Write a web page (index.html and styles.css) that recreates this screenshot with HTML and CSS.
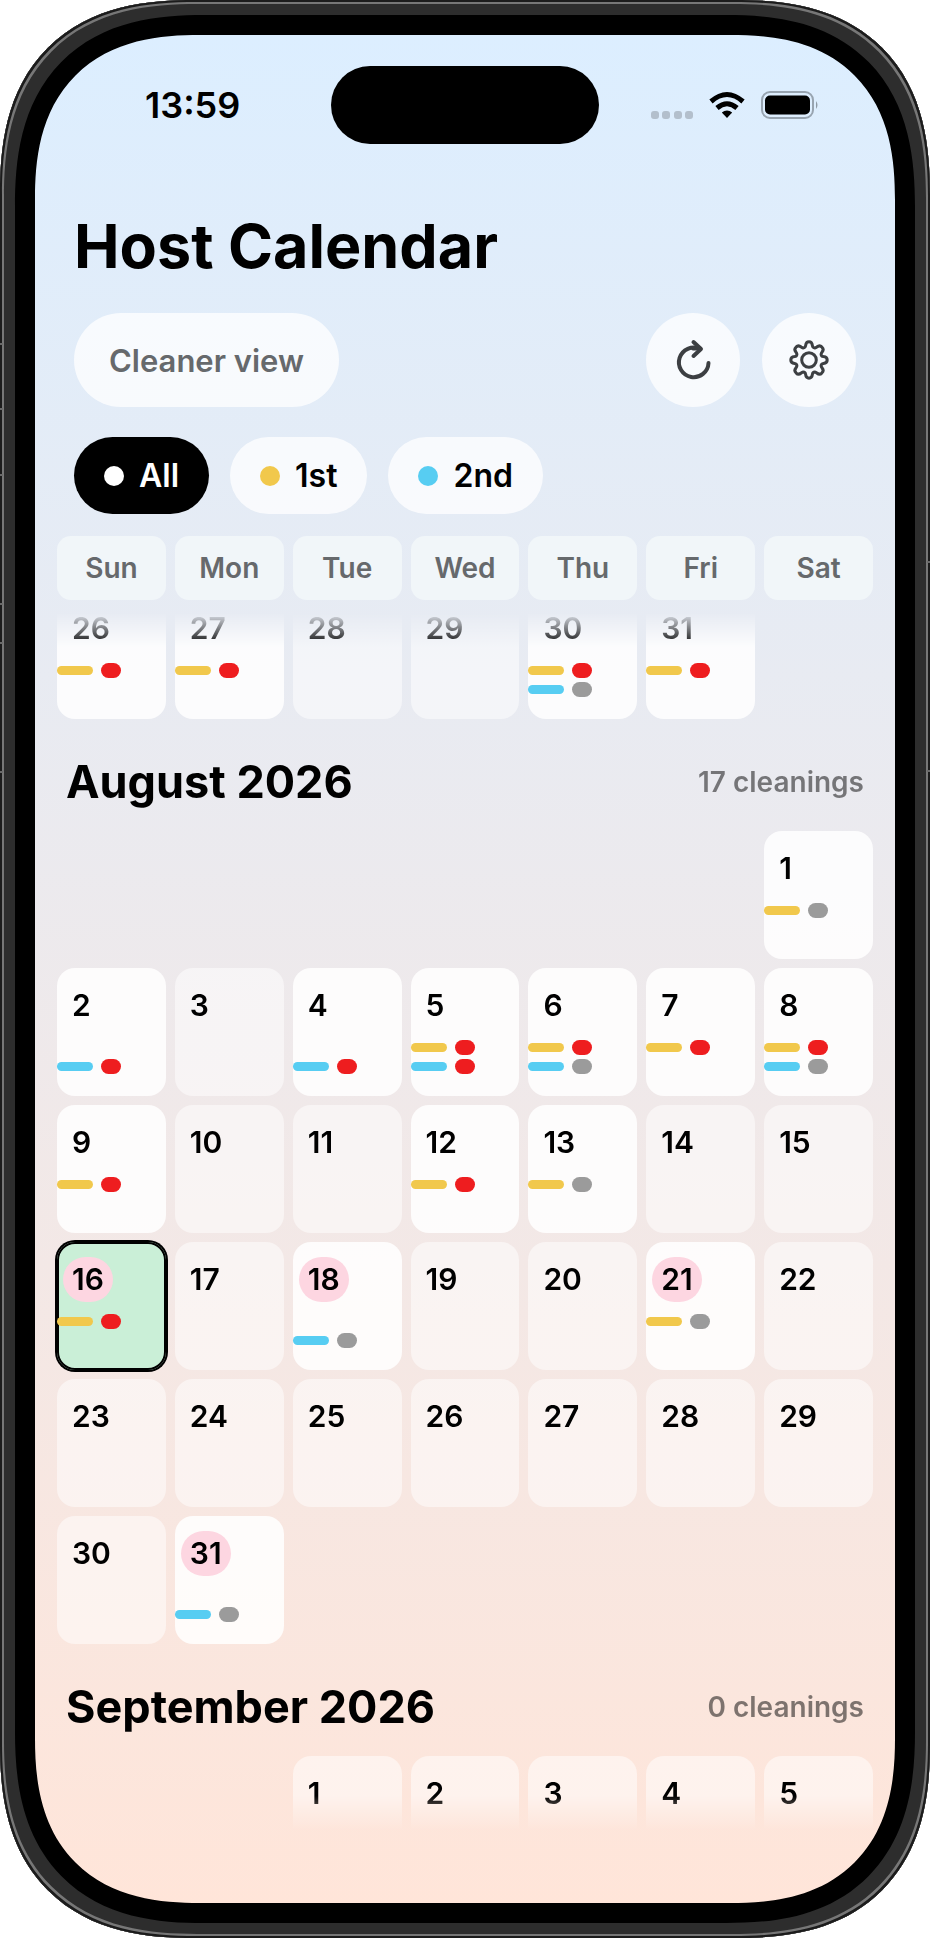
FILE: index.html
```
<!DOCTYPE html>
<html lang="en">
<head>
  <meta charset="UTF-8" />
  <meta name="viewport" content="width=device-width, initial-scale=1" />
  <title>Host Calendar</title>
  <link rel="stylesheet" href="styles.css">
</head>
<body>
  <div class="phone">
    <div class="screen">
      <div class="status-bar">
        <time class="clock">13:59</time>
        <div class="island"></div>
        <div class="status-icons">
          <svg width="42" height="8" viewBox="0 0 42 8" fill="#b3bfcc">
            <rect x="0" y="0" width="8" height="8" rx="3" />
            <rect x="11" y="0" width="8" height="8" rx="3" />
            <rect x="23" y="0" width="8" height="8" rx="3" />
            <rect x="34" y="0" width="8" height="8" rx="3" />
          </svg>
          <svg class="wifi" width="36" height="28" viewBox="0 0 36 28" fill="none" stroke="#000" stroke-width="5">
            <path d="M2 10.5 Q18 -3.500 34 10.500" />
            <path d="M8 17 Q18 8.500 28 17" />
            <path d="M18 27 L12.800 21.500 Q18 17.500 23.200 21.500 Z" fill="#000" stroke="none" />
          </svg>
          <svg width="58" height="28" viewBox="0 0 58 28">
            <rect x="1" y="1" width="51" height="26" rx="8" fill="none" stroke="#98a4b0" stroke-width="2" />
            <rect x="4" y="4.500" width="45" height="19" rx="5" fill="#000" />
            <path d="M55 10 Q58 14 55 18 Z" fill="#8f9ba6" />
          </svg>
        </div>
      </div>

      <header class="top">
        <h1>Host Calendar</h1>
        <div class="actions">
          <button type="button" class="pill-btn">Cleaner view</button>
          <button type="button" class="round-btn" aria-label="Refresh">
            <svg width="40" height="44" viewBox="0 0 40 44" fill="none" stroke="#3c3f42" stroke-width="4" stroke-linecap="round" stroke-linejoin="round">
              <path d="M35.500 25 A14.800 14.800 0 1 1 27 11" />
              <path d="M20 10.500 H27" />
              <path d="M20.500 4 L28 11 L20.500 18" />
            </svg>
          </button>
          <button type="button" class="round-btn" aria-label="Settings">
            <svg width="42" height="42" viewBox="0 0 42 42" fill="none" stroke="#3c3f42" stroke-width="3" stroke-linejoin="round">
              <circle cx="21" cy="21" r="7.300" />
              <path d="M17.600 6.600 Q18 2.800 21 2.800 Q24 2.800 24.400 6.600 Q24.700 8.800 26.800 8.900 Q27.900 8.700 28.800 8 Q31.700 5.600 33.900 8.100 Q36.400 10.300 34 13.200 Q33.300 14.100 33.100 15.200 Q33.200 17.300 35.400 17.600 Q39.200 18 39.200 21 Q39.200 24 35.400 24.400 Q33.200 24.700 33.100 26.800 Q33.300 27.900 34 28.800 Q36.400 31.700 33.900 33.900 Q31.700 36.400 28.800 34 Q27.900 33.300 26.800 33.100 Q24.700 33.200 24.400 35.400 Q24 39.200 21 39.200 Q18 39.200 17.600 35.400 Q17.300 33.200 15.200 33.100 Q14.100 33.300 13.200 34 Q10.300 36.400 8.100 33.900 Q5.600 31.700 8 28.800 Q8.700 27.900 8.900 26.800 Q8.800 24.700 6.600 24.400 Q2.800 24 2.800 21 Q2.800 18 6.600 17.600 Q8.800 17.300 8.900 15.200 Q8.700 14.100 8 13.200 Q5.600 10.300 8.100 8.100 Q10.300 5.600 13.200 8 Q14.100 8.700 15.200 8.900 Q17.300 8.800 17.600 6.600 Z" />
            </svg>
          </button>
        </div>
        <div class="filters">
          <button type="button" class="filter selected"><span class="dot"></span>All</button>
          <button type="button" class="filter first"><span class="dot"></span>1st</button>
          <button type="button" class="filter second"><span class="dot"></span>2nd</button>
        </div>
      </header>

      <div class="week weekdays">
        <span>Sun</span><span>Mon</span><span>Tue</span><span>Wed</span><span>Thu</span><span>Fri</span><span>Sat</span>
      </div>

      <main class="months">
        <section class="week july">
          <button type="button" class="day busy"><span class="num">26</span><span class="row first"><i class="stay"></i><i class="urgent"></i></span></button>
          <button type="button" class="day busy"><span class="num">27</span><span class="row first"><i class="stay"></i><i class="urgent"></i></span></button>
          <button type="button" class="day"><span class="num">28</span></button>
          <button type="button" class="day"><span class="num">29</span></button>
          <button type="button" class="day busy"><span class="num">30</span><span class="row first"><i class="stay"></i><i class="urgent"></i></span><span class="row second"><i class="stay"></i><i class="normal"></i></span></button>
          <button type="button" class="day busy"><span class="num">31</span><span class="row first"><i class="stay"></i><i class="urgent"></i></span></button>
        </section>

        <section>
          <div class="month-head">
            <h2>August 2026</h2>
            <p>17 cleanings</p>
          </div>
          <div class="week">
            <button type="button" class="day busy sat"><span class="num">1</span><span class="row first"><i class="stay"></i><i class="normal"></i></span></button>

            <button type="button" class="day busy"><span class="num">2</span><span class="row"></span><span class="row second"><i class="stay"></i><i class="urgent"></i></span></button>
            <button type="button" class="day"><span class="num">3</span></button>
            <button type="button" class="day busy"><span class="num">4</span><span class="row"></span><span class="row second"><i class="stay"></i><i class="urgent"></i></span></button>
            <button type="button" class="day busy"><span class="num">5</span><span class="row first"><i class="stay"></i><i class="urgent"></i></span><span class="row second"><i class="stay"></i><i class="urgent"></i></span></button>
            <button type="button" class="day busy"><span class="num">6</span><span class="row first"><i class="stay"></i><i class="urgent"></i></span><span class="row second"><i class="stay"></i><i class="normal"></i></span></button>
            <button type="button" class="day busy"><span class="num">7</span><span class="row first"><i class="stay"></i><i class="urgent"></i></span></button>
            <button type="button" class="day busy"><span class="num">8</span><span class="row first"><i class="stay"></i><i class="urgent"></i></span><span class="row second"><i class="stay"></i><i class="normal"></i></span></button>

            <button type="button" class="day busy"><span class="num">9</span><span class="row first"><i class="stay"></i><i class="urgent"></i></span></button>
            <button type="button" class="day"><span class="num">10</span></button>
            <button type="button" class="day"><span class="num">11</span></button>
            <button type="button" class="day busy"><span class="num">12</span><span class="row first"><i class="stay"></i><i class="urgent"></i></span></button>
            <button type="button" class="day busy"><span class="num">13</span><span class="row first"><i class="stay"></i><i class="normal"></i></span></button>
            <button type="button" class="day"><span class="num">14</span></button>
            <button type="button" class="day"><span class="num">15</span></button>

            <button type="button" class="day busy today"><span class="num marked">16</span><span class="row first"><i class="stay"></i><i class="urgent"></i></span></button>
            <button type="button" class="day"><span class="num">17</span></button>
            <button type="button" class="day busy"><span class="num marked">18</span><span class="row"></span><span class="row second"><i class="stay"></i><i class="normal"></i></span></button>
            <button type="button" class="day"><span class="num">19</span></button>
            <button type="button" class="day"><span class="num">20</span></button>
            <button type="button" class="day busy"><span class="num marked">21</span><span class="row first"><i class="stay"></i><i class="normal"></i></span></button>
            <button type="button" class="day"><span class="num">22</span></button>

            <button type="button" class="day"><span class="num">23</span></button>
            <button type="button" class="day"><span class="num">24</span></button>
            <button type="button" class="day"><span class="num">25</span></button>
            <button type="button" class="day"><span class="num">26</span></button>
            <button type="button" class="day"><span class="num">27</span></button>
            <button type="button" class="day"><span class="num">28</span></button>
            <button type="button" class="day"><span class="num">29</span></button>

            <button type="button" class="day"><span class="num">30</span></button>
            <button type="button" class="day busy"><span class="num marked">31</span><span class="row"></span><span class="row second"><i class="stay"></i><i class="normal"></i></span></button>
          </div>
        </section>

        <section>
          <div class="month-head">
            <h2>September 2026</h2>
            <p>0 cleanings</p>
          </div>
          <div class="week">
            <button type="button" class="day tue"><span class="num">1</span></button>
            <button type="button" class="day"><span class="num">2</span></button>
            <button type="button" class="day"><span class="num">3</span></button>
            <button type="button" class="day"><span class="num">4</span></button>
            <button type="button" class="day"><span class="num">5</span></button>
          </div>
        </section>
      </main>
    </div>
  </div>
</body>
</html>
```
FILE: styles.css
```
:root {
  --yellow: #f1c84c;
  --blue: #57cdf2;
  --red: #ee1d1f;
  --grey: #9b9b9b;
  --muted: #66696c;
  --edge: #6a6a6a;
  --font-family: Inter, "Liberation Sans", sans-serif;
}

* {
  box-sizing: border-box;
}

body {
  margin: 0;
  padding-bottom: 2px;
  height: 100vh;
  background: #fff;
  font-family: var(--font-family);
  color: #000;
}

h1,
h2,
p {
  margin: 0;
}

button {
  border: none;
  padding: 0;
  font-family: inherit;
  color: inherit;
  cursor: pointer;
}

/* Device frame */
.phone {
  position: relative;
  height: 100%;
  padding: 35px;
  border-radius: 162px;
  background: #000;
  box-shadow:
    inset 0 0 0 2px #1c1c1c,
    inset 0 0 0 4px #777,
    inset 0 0 0 15px #2d2d2d;
}

/* Seams of the side buttons */
.phone::before,
.phone::after {
  content: "";
  position: absolute;
  top: 0;
  bottom: 0;
  width: 3px;
}

.phone::before {
  left: 0;
  background: linear-gradient(
    transparent 343px, var(--edge) 343px 345px,
    transparent 345px 408px, var(--edge) 408px 410px,
    transparent 410px 474px, var(--edge) 474px 476px,
    transparent 476px 603px, var(--edge) 603px 605px,
    transparent 605px 642px, var(--edge) 642px 644px,
    transparent 644px 771px, var(--edge) 771px 773px,
    transparent 773px
  );
}

.phone::after {
  right: 0;
  background: linear-gradient(
    transparent 561px, var(--edge) 561px 563px,
    transparent 563px 770px, var(--edge) 770px 772px,
    transparent 772px
  );
}

.screen {
  height: 100%;
  display: flex;
  flex-direction: column;
  border-radius: 135px;
  overflow: hidden;
  background: linear-gradient(#dceeff, #ffe5d9);
}

@supports (corner-shape: superellipse(1.3)) {
  .phone {
    border-radius: 195px;
    corner-shape: superellipse(1.3);
  }

  .screen {
    border-radius: 165px;
    corner-shape: superellipse(1.3);
  }
}

/* Status bar */
.status-bar {
  display: grid;
  grid-template-columns: 1fr 268px 1fr;
  align-items: center;
  padding-top: 31px;
}

.clock {
  padding-left: 110px;
  font-size: 36px;
  line-height: 40px;
  font-weight: 600;
}

.island {
  height: 78px;
  border-radius: 40px;
  background: #000;
}

.status-icons {
  display: flex;
  align-items: flex-end;
  gap: 16px;
  padding-left: 52px;
}

/* Title and controls */
.top {
  padding: 64px 39px 0;
}

h1 {
  font-size: 61px;
  line-height: 76px;
  font-weight: 700;
}

.actions {
  display: flex;
  gap: 22px;
  margin-top: 29px;
}

.pill-btn,
.round-btn {
  height: 94px;
  border-radius: 47px;
  background: rgba(255, 255, 255, 0.75);
}

.pill-btn {
  margin-right: auto;
  padding: 0 35px;
  font-size: 31px;
  font-weight: 600;
  color: var(--muted);
}

.round-btn {
  width: 94px;
  display: flex;
  align-items: center;
  justify-content: center;
}

.filters {
  display: flex;
  gap: 21px;
  margin-top: 30px;
}

.filter {
  height: 77px;
  display: flex;
  align-items: center;
  gap: 15px;
  padding: 0 30px;
  border-radius: 39px;
  background: rgba(255, 255, 255, 0.75);
  font-size: 32px;
  font-weight: 600;
}

.filter.selected {
  background: #000;
  color: #fff;
}

.dot {
  width: 20px;
  height: 20px;
  border-radius: 50%;
  background: #fff;
}

.filter.first .dot {
  background: var(--yellow);
}

.filter.second .dot {
  background: var(--blue);
}

/* Calendar */
.week {
  display: grid;
  grid-template-columns: repeat(7, 1fr);
  gap: 9px;
  padding: 0 22px;
}

.weekdays {
  margin-top: 22px;
}

.weekdays span {
  border-radius: 14px;
  background: #f1f6f9;
  font-size: 28px;
  line-height: 64px;
  font-weight: 600;
  text-align: center;
  color: var(--muted);
}

.months {
  flex: 1;
  min-height: 0;
  margin-bottom: 72px;
  overflow: auto;
  scrollbar-width: none;
  -webkit-mask-image: linear-gradient(transparent 12px, #000 47px, #000 calc(100% - 35px), transparent);
  mask-image: linear-gradient(transparent 12px, #000 47px, #000 calc(100% - 35px), transparent);
}

/* July is already scrolled partly under the weekday row */
.july {
  margin-top: -9px;
}

.month-head {
  display: flex;
  align-items: center;
  justify-content: space-between;
  padding: 34px 31px 20px;
}

h2 {
  font-size: 45px;
  line-height: 58px;
  font-weight: 700;
}

.month-head p {
  font-size: 28px;
  font-weight: 600;
  color: rgba(0, 0, 0, 0.5);
}

.day {
  height: 128px;
  display: flex;
  flex-direction: column;
  align-items: flex-start;
  justify-content: flex-start;
  gap: 4px;
  padding-top: 15px;
  border-radius: 18px;
  background: rgba(255, 255, 255, 0.5);
}

.day.busy {
  background: rgba(255, 255, 255, 0.85);
}

.day.today {
  background: #caefd7;
  box-shadow: 0 0 0 2px #000, inset 0 0 0 2px #000;
}

.sat {
  grid-column: 7;
}

.tue {
  grid-column: 3;
}

.num {
  margin: 0 0 8px 6px;
  padding: 0 9px;
  border-radius: 23px;
  font-size: 30px;
  line-height: 45px;
  font-weight: 600;
}

.num.marked {
  background: #fdd6e1;
}

.row {
  height: 15px;
  display: flex;
  align-items: center;
  gap: 8px;
}

.row i {
  width: 20px;
  height: 15px;
  border-radius: 8px;
}

.row .stay {
  width: 36px;
  height: 9px;
  border-radius: 5px;
}

.first .stay {
  background: var(--yellow);
}

.second .stay {
  background: var(--blue);
}

.urgent {
  background: var(--red);
}

.normal {
  background: var(--grey);
}
```
